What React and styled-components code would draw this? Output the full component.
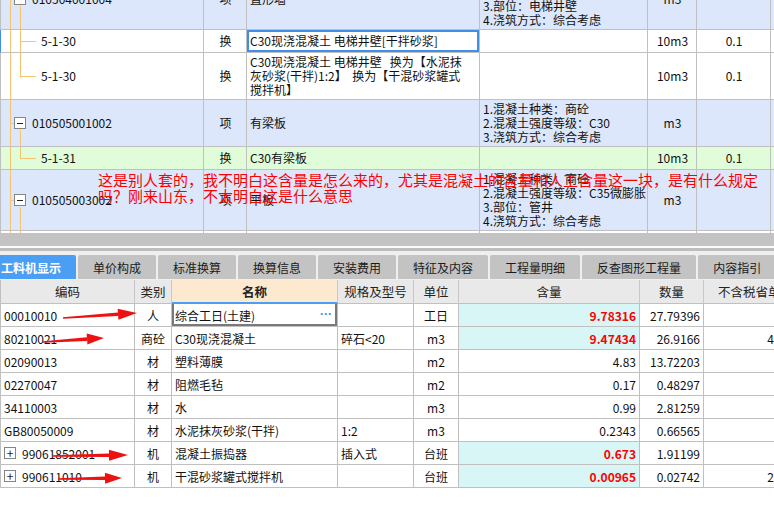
import React from 'react'
import styled, { createGlobalStyle } from 'styled-components'

const GlobalStyle = createGlobalStyle`
  html, body {
    margin: 0;
    padding: 0;
    background: #fff;
    overflow: hidden;
  }
  body {
    font-family: "Noto Sans CJK SC", "Noto Sans", sans-serif;
    font-size: 12px;
    color: #111;
  }
`

const LINE = '#c0c0c0'
const TREE = '#f6c46e'
const ROW_BG = { item: '#dce7fb', child: '#ffffff', green: '#e1fcd9' }

const topRows = [
  {
    kind: 'item', h: 61, code: '010504001004', type: '项', name: ['直形墙'], open: true,
    feat: ['1.混凝土种类：商砼', '2.混凝土强度等级：C30', '3.部位：电梯井壁', '4.浇筑方式：综合考虑'],
    unit: 'm3'
  },
  {
    kind: 'child', h: 23, code: '5-1-30', type: '换', name: ['C30现浇混凝土 电梯井壁[干拌砂浆]'],
    unit: '10m3', qty: '0.1', selected: true
  },
  {
    kind: 'child', h: 47, code: '5-1-30', type: '换', last: true,
    name: ['C30现浇混凝土 电梯井壁   换为【水泥抹', '灰砂浆(干拌)1:2】  换为【干混砂浆罐式', '搅拌机】'],
    unit: '10m3', qty: '0.1'
  },
  {
    kind: 'item', h: 47, code: '010505001002', type: '项', name: ['有梁板'], open: true,
    feat: ['1.混凝土种类：商砼', '2.混凝土强度等级：C30', '3.浇筑方式：综合考虑'],
    unit: 'm3'
  },
  {
    kind: 'child', h: 23, code: '5-1-31', type: '换', name: ['C30有梁板'], last: true, green: true,
    unit: '10m3', qty: '0.1'
  },
  {
    kind: 'item', h: 61, code: '010505003002', type: '项', name: ['平板'], open: true,
    feat: ['1.混凝土种类：商砼', '2.混凝土强度等级：C35微膨胀', '3.部位：管井', '4.浇筑方式：综合考虑'],
    unit: 'm3'
  },
  { kind: 'child', h: 23, code: '5-1-33', type: '换', name: ['C35平板'], unit: '10m3', qty: '0.1' }
]

const tabs = ['工料机显示', '单价构成', '标准换算', '换算信息', '安装费用', '特征及内容', '工程量明细', '反查图形工程量', '内容指引']

const headers = ['编码', '类别', '名称', '规格及型号', '单位', '含量', '数量', '不含税省单价']

const items = [
  { code: '00010010', type: '人', name: '综合工日(土建)', unit: '工日', amount: '9.78316', hot: true, qty: '27.79396', selected: true },
  { code: '80210021', type: '商砼', name: 'C30现浇混凝土', spec: '碎石<20', unit: 'm3', amount: '9.47434', hot: true, qty: '26.9166', price: '410.00' },
  { code: '02090013', type: '材', name: '塑料薄膜', unit: 'm2', amount: '4.83', qty: '13.72203' },
  { code: '02270047', type: '材', name: '阻燃毛毡', unit: 'm2', amount: '0.17', qty: '0.48297' },
  { code: '34110003', type: '材', name: '水', unit: 'm3', amount: '0.99', qty: '2.81259' },
  { code: 'GB80050009', type: '材', name: '水泥抹灰砂浆(干拌)', spec: '1:2', unit: 'm3', amount: '0.2343', qty: '0.66565' },
  { code: '99061852001', type: '机', name: '混凝土振捣器', spec: '插入式', unit: '台班', amount: '0.673', hot: true, qty: '1.91199', expand: true },
  { code: '990611010', type: '机', name: '干混砂浆罐式搅拌机', unit: '台班', amount: '0.00965', hot: true, qty: '0.02742', price: '226.06', expand: true }
]

const arrows = [
  { x1: 63, y1: 318, x2: 137, y2: 313 },
  { x1: 43, y1: 342, x2: 104, y2: 338, head: 17 },
  { x1: 52, y1: 456, x2: 128, y2: 455 },
  { x1: 58, y1: 479, x2: 122, y2: 478, head: 17 }
]

function TreeLines({ h, kind, last, open }) {
  const c = Math.floor(h / 2) + 0.5
  return (
    <TreeSvg width="40" height={h}>
      <line x1="9.5" y1="0" x2="9.5" y2={h} />
      {kind === 'item' ? (
        <>
          <line x1="9.5" y1={c} x2="13" y2={c} />
          {open && <line x1="19.5" y1={c + 6} x2="19.5" y2={h} />}
          <rect x="13.5" y={c - 6} width="11" height="11" fill="#fff" stroke="#858585" />
          <line x1="16" y1={c} x2="22" y2={c} stroke="#222" />
        </>
      ) : (
        <>
          <line x1="19.5" y1="0" x2="19.5" y2={last ? c : h} />
          <line x1="19.5" y1={c} x2="35" y2={c} />
        </>
      )}
    </TreeSvg>
  )
}

function Arrow({ x1, y1, x2, y2, head = 19, half = 5.5 }) {
  const dx = x2 - x1
  const dy = y2 - y1
  const len = Math.hypot(dx, dy)
  const ux = dx / len
  const uy = dy / len
  const nx = -uy
  const ny = ux
  const bx = x2 - ux * head
  const by = y2 - uy * head
  const shaft = [
    [x1 + nx * 0.7, y1 + ny * 0.7],
    [bx + nx * 1.8, by + ny * 1.8],
    [bx - nx * 1.8, by - ny * 1.8],
    [x1 - nx * 0.7, y1 - ny * 0.7]
  ].map(p => p.join(',')).join(' ')
  const tip = [
    [bx + nx * half, by + ny * half],
    [x2, y2],
    [bx - nx * half, by - ny * half]
  ].map(p => p.join(',')).join(' ')
  return (
    <>
      <polygon points={shaft} />
      <polygon points={tip} />
    </>
  )
}

export default function App() {
  return (
    <>
      <GlobalStyle />
      <Page>
        <TopGrid>
          <TopInner>
            {topRows.map((r, i) => (
              <TopRow key={i} $h={r.h} $bg={r.green ? ROW_BG.green : ROW_BG[r.kind]}>
                <TreeCell $indent={r.kind === 'item' ? 31 : 40} $mark={r.selected}>
                  <TreeLines h={r.h} kind={r.kind} last={r.last} open={r.open} />
                  <span>{r.code}</span>
                </TreeCell>
                <Cell $align="center">{r.type}</Cell>
                <Cell $selected={r.selected}>
                  <Lines>{r.name.map((l, j) => <div key={j}>{l}</div>)}</Lines>
                </Cell>
                <Cell>
                  <Lines>{(r.feat || []).map((l, j) => <div key={j}>{l}</div>)}</Lines>
                </Cell>
                <Cell $align="center">{r.unit}</Cell>
                <Cell $align="center">{r.qty}</Cell>
                <Cell />
              </TopRow>
            ))}
          </TopInner>
        </TopGrid>

        <Splitter />

        <TabBar>
          {tabs.map((t, i) => (
            <Tab key={t} $active={i === 0}>{t}</Tab>
          ))}
        </TabBar>

        <BottomGrid>
          <GridRow $h={24}>
            {headers.map((h, i) => (
              <HeadCell key={h} $active={i === 2} $first={i === 0}>{h}</HeadCell>
            ))}
          </GridRow>
          {items.map(it => (
            <GridRow key={it.code} $h={23}>
              <BodyCell $first>
                {it.expand && <PlusBox>+</PlusBox>}
                {it.code}
              </BodyCell>
              <BodyCell $align="center">{it.type}</BodyCell>
              <BodyCell $selected={it.selected}>
                {it.name}
                {it.selected && <More>···</More>}
              </BodyCell>
              <BodyCell>{it.spec}</BodyCell>
              <BodyCell $align="center">{it.unit}</BodyCell>
              <BodyCell $align="right" $hot={it.hot}>{it.amount}</BodyCell>
              <BodyCell $align="right">{it.qty}</BodyCell>
              <BodyCell $align="right">{it.price}</BodyCell>
            </GridRow>
          ))}
        </BottomGrid>

        <Note>
          <div>这是别人套的，我不明白这含量是怎么来的，尤其是混凝土的含量和人工含量这一块，是有什么规定</div>
          <div>吗？刚来山东，不太明白这是什么意思</div>
        </Note>

        <ArrowLayer width="774" height="518">
          {arrows.map((a, i) => <Arrow key={i} {...a} />)}
        </ArrowLayer>
      </Page>
    </>
  )
}

const Page = styled.div`
  position: relative;
  width: 774px;
  height: 518px;
  overflow: hidden;
  display: flex;
  flex-direction: column;
  background: #fff;
`

const TopGrid = styled.div`
  flex: none;
  height: 233px;
  overflow: hidden;
`

const TopInner = styled.div`
  margin-top: -31px;
`

const TopRow = styled.div`
  display: grid;
  grid-template-columns: 204px 43px 233px 168px 49px 74px 60px;
  height: ${p => p.$h}px;
  background: ${p => p.$bg};
`

const Cell = styled.div`
  box-sizing: border-box;
  display: flex;
  align-items: center;
  justify-content: ${p => (p.$align === 'center' ? 'center' : 'flex-start')};
  padding: 0 2px 0 3px;
  border-right: 1px solid ${LINE};
  border-bottom: 1px solid ${LINE};
  white-space: pre;
  line-height: 14px;
  overflow: hidden;
  background: ${p => (p.$selected ? '#fff' : 'transparent')};
  box-shadow: ${p => (p.$selected ? 'inset 0 0 0 2px #3f8fe8' : 'none')};
`

const TreeCell = styled(Cell)`
  position: relative;
  padding-left: ${p => p.$indent}px;
  border-left: 1px solid ${p => (p.$mark ? '#3f8fe8' : LINE)};
`

const TreeSvg = styled.svg`
  position: absolute;
  left: 0;
  top: 0;
  stroke: ${TREE};
  stroke-width: 1;
  shape-rendering: crispEdges;
`

const Lines = styled.div`
  display: flex;
  flex-direction: column;
`

const Splitter = styled.div`
  flex: none;
  height: 22px;
  background: linear-gradient(
    to bottom,
    #c3c3c3 0 13px,
    #fbfbfb 13px 15px,
    #bdbdbd 15px 18px,
    #efefef 18px 22px
  );
`

const TabBar = styled.div`
  flex: none;
  display: flex;
  gap: 2px;
  height: 25px;
  padding-bottom: 1px;
  box-sizing: border-box;
  background: #efefef;
  overflow: hidden;
`

const Tab = styled.div`
  flex: none;
  display: flex;
  align-items: center;
  padding: 0 15px;
  margin-left: ${p => (p.$active ? '-14px' : '0')};
  border-radius: 2px 2px 0 0;
  background: ${p => (p.$active ? '#4a9ff5' : '#c3c3c3')};
  color: ${p => (p.$active ? '#fff' : '#1a1a1a')};
  font-weight: ${p => (p.$active ? 700 : 400)};
  font-size: 12px;
`

const BottomGrid = styled.div`
  flex: none;
  display: flex;
  flex-direction: column;
`

const GridRow = styled.div`
  display: grid;
  grid-template-columns: 135px 37px 166px 76px 45px 181px 64px 104px;
  height: ${p => p.$h}px;
`

const HeadCell = styled.div`
  box-sizing: border-box;
  display: flex;
  align-items: center;
  justify-content: center;
  white-space: nowrap;
  overflow: hidden;
  background: ${p => (p.$active ? '#fde9cf' : '#e9e9e9')};
  font-weight: ${p => (p.$active ? 700 : 400)};
  font-size: 12.5px;
  color: #222;
  border-left: ${p => (p.$first ? `1px solid ${LINE}` : 'none')};
  border-right: 1px solid #c8c8c8;
  border-bottom: ${p => (p.$active ? '2px solid #4a9ff5' : `1px solid ${LINE}`)};
`

const BodyCell = styled.div`
  position: relative;
  box-sizing: border-box;
  display: flex;
  align-items: center;
  justify-content: ${p =>
    p.$align === 'center' ? 'center' : p.$align === 'right' ? 'flex-end' : 'flex-start'};
  padding: 0 3px;
  white-space: nowrap;
  overflow: hidden;
  border-left: ${p => (p.$first ? `1px solid ${LINE}` : 'none')};
  border-right: 1px solid ${LINE};
  border-bottom: 1px solid ${LINE};
  background: ${p => (p.$hot ? '#d8f6f6' : '#fff')};
  color: ${p => (p.$hot ? '#ff0000' : '#111')};
  font-weight: ${p => (p.$hot ? 700 : 400)};
  box-shadow: ${p =>
    p.$selected ? 'inset 2px 0 0 #7a7a7a, inset -2px 0 0 #7a7a7a, inset 0 -2px 0 #7a7a7a' : 'none'};
`

const PlusBox = styled.span`
  flex: none;
  box-sizing: border-box;
  width: 12px;
  height: 12px;
  margin-right: 6px;
  border: 1px solid #858585;
  display: flex;
  align-items: center;
  justify-content: center;
  font-size: 12px;
  line-height: 1;
  color: #222;
`

const More = styled.span`
  position: absolute;
  right: 5px;
  top: 3px;
  font-family: "Liberation Sans", sans-serif;
  color: #3a8ee6;
  font-weight: 700;
  font-size: 12px;
`

const Note = styled.div`
  position: absolute;
  left: 98px;
  top: 172px;
  color: #ff0000;
  font-size: 15px;
  line-height: 16px;
  white-space: nowrap;
  pointer-events: none;
`

const ArrowLayer = styled.svg`
  position: absolute;
  left: 0;
  top: 0;
  fill: #ee1111;
  pointer-events: none;
`
